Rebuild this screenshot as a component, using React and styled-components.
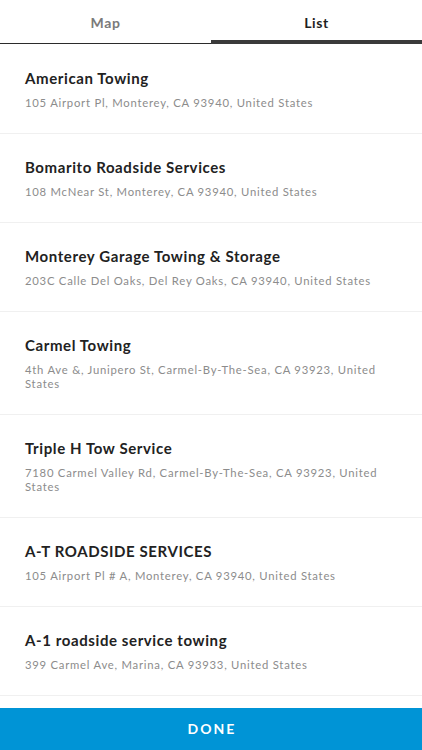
import React, { useState } from "react"
import styled, { createGlobalStyle } from "styled-components"

const places = [
    { name: "American Towing", address: "105 Airport Pl, Monterey, CA 93940, United States" },
    { name: "Bomarito Roadside Services", address: "108 McNear St, Monterey, CA 93940, United States" },
    { name: "Monterey Garage Towing & Storage", address: "203C Calle Del Oaks, Del Rey Oaks, CA 93940, United States" },
    { name: "Carmel Towing", address: "4th Ave &, Junipero St, Carmel-By-The-Sea, CA 93923, United States" },
    { name: "Triple H Tow Service", address: "7180 Carmel Valley Rd, Carmel-By-The-Sea, CA 93923, United States" },
    { name: "A-T ROADSIDE SERVICES", address: "105 Airport Pl # A, Monterey, CA 93940, United States" },
    { name: "A-1 roadside service towing", address: "399 Carmel Ave, Marina, CA 93933, United States" },
]

const Global = createGlobalStyle`
    html, body {
        margin: 0;
        padding: 0;
        background: #fff;
    }
    body {
        font-family: Lato, "Open Sans", sans-serif;
        -webkit-font-smoothing: antialiased;
    }
`

const Screen = styled.div`
    display: flex;
    flex-direction: column;
    width: 422px;
    height: 750px;
    overflow: hidden;
    background: #fff;
`

const Tabs = styled.nav`
    display: flex;
    flex: 0 0 auto;
    height: 44px;
    border-bottom: 1px solid #2b2b2b;
    box-sizing: border-box;
`

const Tab = styled.button`
    flex: 1;
    position: relative;
    border: 0;
    background: none;
    padding: 1px 0 0;
    font-family: Lato, sans-serif;
    font-size: 14px;
    font-weight: 700;
    letter-spacing: 0.6px;
    color: ${(p) => (p.$active ? "#1f1f1f" : "#7a7a7a")};
    cursor: pointer;

    &:after {
        content: "";
        display: ${(p) => (p.$active ? "block" : "none")};
        position: absolute;
        left: 0;
        right: 0;
        bottom: -1px;
        height: 4px;
        background: #3a3a3a;
    }
`

const List = styled.ul`
    flex: 1;
    margin: 0;
    padding: 1px 0 0;
    list-style: none;
    overflow: hidden;
`

const Row = styled.li`
    padding: 24px 40px 23px 25px;
    border-bottom: 1px solid #f0f0f0;
`

const Name = styled.div`
    font-size: 15px;
    line-height: 18px;
    font-weight: 700;
    letter-spacing: 0.6px;
    color: #222;
`

const Address = styled.div`
    margin-top: 9px;
    font-size: 11.3px;
    line-height: 14px;
    letter-spacing: 0.75px;
    color: #8c8c8c;
`

const Done = styled.button`
    flex: 0 0 42px;
    border: 0;
    background: #0094d6;
    color: #fff;
    font-family: Lato, sans-serif;
    font-size: 14px;
    font-weight: 700;
    letter-spacing: 2px;
    padding: 0 0 1px 2px;
`

export default function App() {
    const [tab, setTab] = useState("list")

    return (
        <Screen>
            <Global />
            <Tabs>
                <Tab $active={tab === "map"} onClick={() => setTab("map")}>Map</Tab>
                <Tab $active={tab === "list"} onClick={() => setTab("list")}>List</Tab>
            </Tabs>

            <List>
                {places.map((place) => (
                    <Row key={place.name}>
                        <Name>{place.name}</Name>
                        <Address>{place.address}</Address>
                    </Row>
                ))}
            </List>

            <Done>DONE</Done>
        </Screen>
    )
}
